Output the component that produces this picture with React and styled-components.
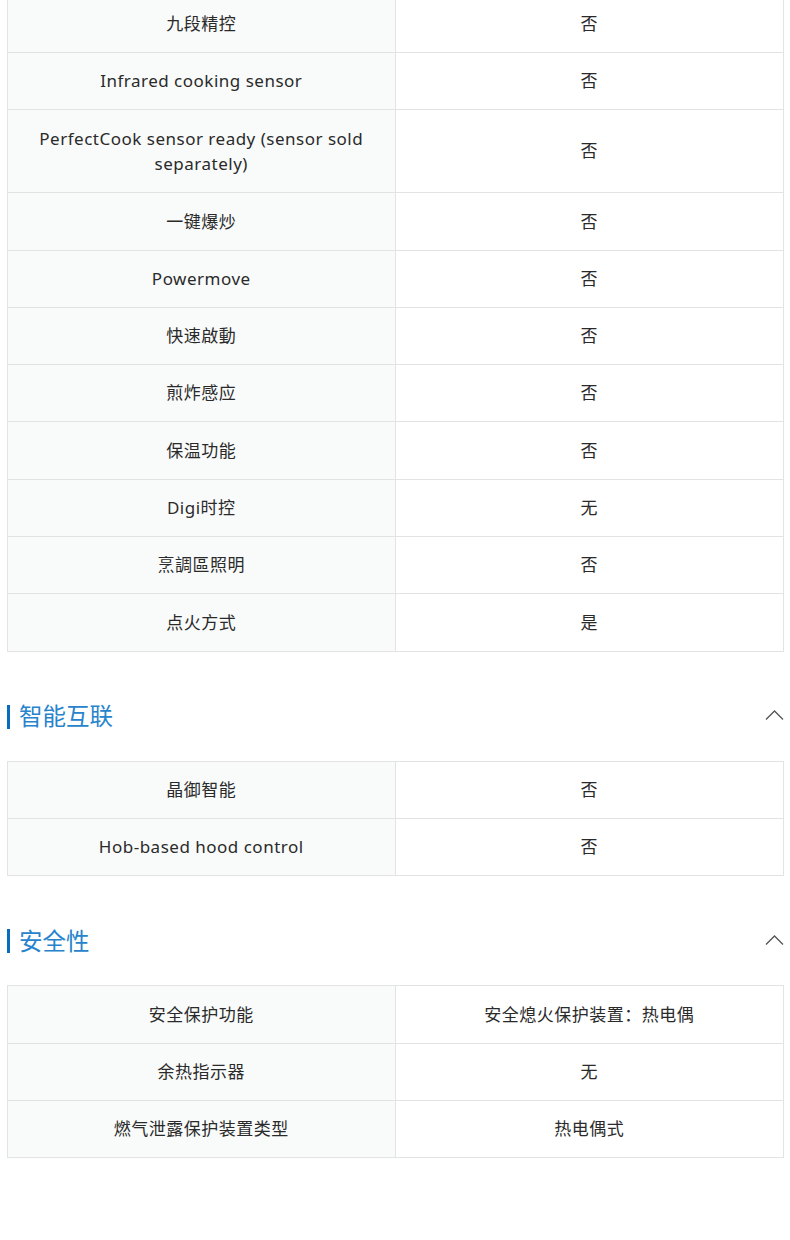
import React from "react";
import styled, { createGlobalStyle } from "styled-components";

const Global = createGlobalStyle`
  html, body { margin: 0; padding: 0; background: #fff; }
  body { font-family: "Noto Sans", "Noto Sans CJK SC", sans-serif; color: #303030; }
`;

const Page = styled.div`
  padding: 0 6px 80px 7px;
  margin-top: -5.3px;
`;

const Table = styled.div`
  border: 1px solid #e3e3e3;
  border-bottom: none;
`;

const Row = styled.div`
  display: grid;
  grid-template-columns: 1fr 1fr;
  border-bottom: 1px solid #e3e3e3;
`;

const Cell = styled.div`
  display: flex;
  align-items: center;
  justify-content: center;
  text-align: center;
  padding: 15.3px 20px;
  font-size: 17px;
  line-height: 25.7px;
  letter-spacing: 0.5px;
  color: #2a2a2a;
  background: ${(p) => (p.$label ? "#f9fafa" : "#ffffff")};
  border-right: ${(p) => (p.$label ? "1px solid #e3e3e3" : "none")};
`;

const Heading = styled.div`
  display: flex;
  align-items: center;
  height: 24px;
  margin: 53px 0 32px;
`;

const Bar = styled.span`
  width: 3px;
  height: 24px;
  background: #0a6cbf;
  margin-right: 9px;
`;

const Title = styled.h2`
  flex: 1;
  margin: 0 0 3px;
  font-size: 23.5px;
  font-weight: 400;
  line-height: 24px;
  color: #2784cc;
  font-family: "Noto Sans CJK SC", sans-serif;
`;

const ChevronIcon = styled.svg`
  margin-bottom: 3px;
`;

const Chevron = () => (
  <ChevronIcon width="19" height="12" viewBox="0 0 19 12" fill="none">
    <path d="M1 10.5 L9.5 2 L18 10.5" stroke="#555" strokeWidth="1.3" />
  </ChevronIcon>
);

const sections = [
  {
    rows: [
      ["九段精控", "否"],
      ["Infrared cooking sensor", "否"],
      ["PerfectCook sensor ready (sensor sold separately)", "否"],
      ["一键爆炒", "否"],
      ["Powermove", "否"],
      ["快速啟動", "否"],
      ["煎炸感应", "否"],
      ["保温功能", "否"],
      ["Digi时控", "无"],
      ["烹調區照明", "否"],
      ["点火方式", "是"],
    ],
  },
  {
    title: "智能互联",
    rows: [
      ["晶御智能", "否"],
      ["Hob-based hood control", "否"],
    ],
  },
  {
    title: "安全性",
    rows: [
      ["安全保护功能", "安全熄火保护装置：热电偶"],
      ["余热指示器", "无"],
      ["燃气泄露保护装置类型", "热电偶式"],
    ],
  },
];

export default function App() {
  return (
    <>
      <Global />
      <Page>
        {sections.map((s, i) => (
          <React.Fragment key={i}>
            {s.title && (
              <Heading>
                <Bar />
                <Title>{s.title}</Title>
                <Chevron />
              </Heading>
            )}
            <Table>
              {s.rows.map(([a, b], j) => (
                <Row key={j}>
                  <Cell $label>{a}</Cell>
                  <Cell>{b}</Cell>
                </Row>
              ))}
            </Table>
          </React.Fragment>
        ))}
      </Page>
    </>
  );
}
